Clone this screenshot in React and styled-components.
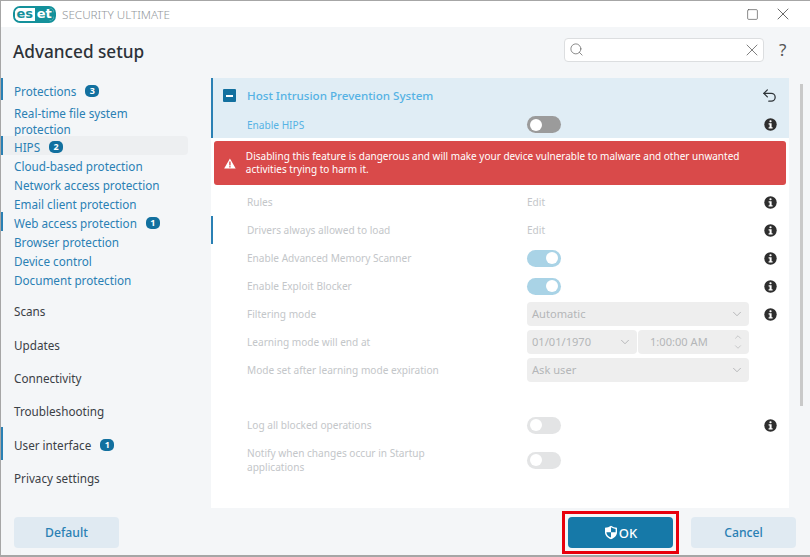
import React from 'react';
import styled, { createGlobalStyle } from 'styled-components';
import { Search, X, Square, ChevronDown, ChevronUp, Undo2 } from 'lucide-react';

const Global = createGlobalStyle`
  html, body {
    margin: 0;
    padding: 0;
    background: #fff;
  }
  * {
    box-sizing: border-box;
  }
`;

const Win = styled.div`
  width: 810px;
  height: 557px;
  display: flex;
  flex-direction: column;
  border-top: 1px solid #a6a6a6;
  border-left: 1px solid #a6a6a6;
  border-bottom: 2px solid #a6a6a6;
  background: #f4f6f8;
  font-family: "Noto Sans", sans-serif;
  font-size: 11.7px;
  color: #3b4046;
  overflow: hidden;
`;

const TitleBar = styled.div`
  height: 26px;
  flex: none;
  background: #fff;
  display: flex;
  align-items: center;
  padding: 0 17px 0 12px;
`;

const Logo = styled.div`
  width: 43px;
  height: 17px;
  border: 2px solid #14919b;
  border-radius: 7px;
  display: flex;
  align-items: stretch;
  overflow: hidden;
  font-family: "DejaVu Sans", sans-serif;
  font-weight: 700;
  font-size: 13px;
  line-height: 11px;
`;

const LogoPart = styled.span`
  flex: 1;
  text-align: center;
  background: ${p => (p.$fill ? '#14919b' : '#fff')};
  color: ${p => (p.$fill ? '#fff' : '#14919b')};
`;

const Product = styled.span`
  margin-left: 6px;
  font-size: 11.7px;
  font-weight: 300;
  color: #93979b;
  flex: 1;
`;

const MaxBtn = styled.span`
  display: flex;
  color: #4a4a4a;
`;

const CloseBtn = styled(MaxBtn)`
  margin-left: 14px;
`;

const Head = styled.div`
  height: 51px;
  flex: none;
  display: flex;
  align-items: center;
  padding: 0 21px 0 12px;
`;

const Title = styled.h1`
  margin: 0;
  flex: 1;
  font-size: 17.2px;
  font-weight: 500;
  color: #2c3238;
  position: relative;
  top: -1px;
`;

const SearchBox = styled.div`
  width: 200px;
  height: 24px;
  background: #fff;
  border: 1px solid #dcdee0;
  border-radius: 4px;
  display: flex;
  align-items: center;
  justify-content: space-between;
  padding: 0 1px 0 4px;
  color: #666;
  position: relative;
  top: -3px;
`;

const Help = styled.span`
  width: 10px;
  margin-left: 15px;
  font-size: 17px;
  color: #555;
  position: relative;
  top: -3px;
`;

const Body = styled.div`
  flex: 1;
  min-height: 0;
  display: flex;
`;

const Side = styled.nav`
  width: 210px;
  flex: none;
  display: flex;
  flex-direction: column;
`;

const NavItem = styled.div`
  width: 187px;
  min-height: 19px;
  padding: 3px 0 0 11px;
  display: flex;
  align-items: center;
  gap: 9px;
  line-height: 16px;
  color: #2a80b4;
  border-left: 2px solid ${p => (p.$mark ? '#2a80b4' : 'transparent')};
  border-radius: 0 4px 4px 0;
  background: ${p => (p.$active ? '#edeff1' : 'transparent')};
`;

const TopItem = styled(NavItem)`
  height: 33.4px;
  color: #3b4046;
`;

const FirstItem = styled(NavItem)`
  height: 22px;
  margin-bottom: 3px;
`;

const WrapItem = styled(NavItem)`
  height: 33px;
  padding-top: 2px;
`;

const ScansItem = styled(TopItem)`
  margin-top: 5px;
`;

const Badge = styled.span`
  width: 14px;
  height: 12px;
  border-radius: 5px;
  background: #12709f;
  color: #fff;
  font-size: 9px;
  font-weight: 700;
  line-height: 12px;
  text-align: center;
`;

const Panel = styled.main`
  width: 578px;
  height: 430px;
  flex: none;
  background: #fff;
`;

const PanelHead = styled.div`
  height: 60px;
  background: #e0edf5;
  border-left: 2px solid #2a80b4;
`;

const HeadRow = styled.div`
  height: 33px;
  display: flex;
  align-items: center;
  padding: 2px 11px 0 10px;
  color: #55b2e4;
  font-size: 11.6px;
  font-weight: 500;
`;

const Collapse = styled.span`
  width: 13px;
  height: 13px;
  background: #12709f;
  border-radius: 1px;
  margin-right: 11px;
  display: flex;
  align-items: center;
  justify-content: center;
  &::before {
    content: '';
    width: 7px;
    height: 2px;
    background: #fff;
  }
`;

const HeadText = styled.span`
  flex: 1;
`;

const Row = styled.div`
  display: grid;
  grid-template-columns: 280px 222px 1fr;
  align-items: center;
  height: ${p => p.$h || 28}px;
  padding-left: 34px;
  border-left: 2px solid ${p => (p.$mark ? '#2a80b4' : 'transparent')};
  color: ${p => (p.$on ? '#55b2e4' : '#c3c6c9')};
  font-size: 10.1px;
  line-height: 14px;
`;

const HipsRow = styled(Row)`
  border-left: 0;
`;

const Alert = styled.div`
  margin: 3px;
  height: 44px;
  background: #d94a4a;
  border-radius: 3px;
  display: flex;
  align-items: center;
  gap: 10px;
  padding: 0 16px 0 10px;
  color: #fff;
  font-size: 10px;
  line-height: 13px;
`;

const Toggle = styled.span`
  width: 34px;
  height: 17px;
  border-radius: 9px;
  background: ${p => (p.$dark ? '#9b9b9b' : p.$on ? '#a9d3e6' : '#e3e4e5')};
  display: flex;
  align-items: center;
  justify-content: ${p => (p.$on ? 'flex-end' : 'flex-start')};
  padding: 0 3px;
  &::before {
    content: '';
    width: 12px;
    height: 12px;
    border-radius: 50%;
    background: #fff;
  }
`;

const InfoWrap = styled.span`
  display: flex;
  justify-content: flex-end;
  padding-right: 12px;
`;

const Fields = styled.div`
  display: flex;
  gap: 1px;
  width: 222px;
`;

const Select = styled.div`
  flex: ${p => (p.$w ? `0 0 ${p.$w}px` : 1)};
  height: 24px;
  background: #eeeeee;
  border-radius: 4px;
  display: flex;
  align-items: center;
  justify-content: space-between;
  padding: 0 5px;
  font-size: 11.1px;
  color: #b4b6b8;
  svg {
    color: #8f9194;
  }
`;

const TimeText = styled.span`
  padding-left: 7px;
`;

const Arrows = styled.span`
  display: flex;
  flex-direction: column;
  margin-right: 1px;
`;

const Spacer = styled.div`
  height: ${p => p.$h}px;
`;

const Track = styled.div`
  flex: 1;
  position: relative;
`;

const Thumb = styled.span`
  position: absolute;
  left: 11px;
  top: 6px;
  width: 3px;
  height: 322px;
  background: #c9c9c9;
`;

const Footer = styled.div`
  height: 47px;
  flex: none;
  display: flex;
  align-items: center;
  padding: 2px 14px 0 13px;
`;

const Btn = styled.div`
  width: 105px;
  height: 31px;
  background: #e0eaf2;
  color: #2a80b4;
  border-radius: 4px;
  font-size: 12.2px;
  font-weight: 500;
  display: flex;
  align-items: center;
  justify-content: center;
`;

const OkFrame = styled.div`
  margin-left: auto;
  margin-right: 12px;
  border: 3px solid #e8000d;
  padding: 3px;
  width: 117px;
  height: 43px;
  display: flex;
`;

const OkBtn = styled(Btn)`
  flex: 1;
  height: 100%;
  background: #1679a8;
  color: #fff;
  font-size: 13px;
  gap: 1px;
`;

const Info = () => (
  <svg width="13" height="13" viewBox="0 0 13 13">
    <circle cx="6.5" cy="6.5" r="6.2" fill="#2e2e2e" />
    <rect x="5.4" y="2.2" width="2.2" height="2" rx="1" fill="#fff" />
    <path d="M4.6 5.2h3v4h1v1.3H4.6V9.2h1V6.5h-1z" fill="#fff" />
  </svg>
);

const Warn = () => (
  <svg width="14" height="13" viewBox="0 0 14 13">
    <path d="M7 0.5L13.8 12.5H0.2z" fill="#fff" />
    <rect x="6.2" y="4.2" width="1.6" height="4.6" fill="#d94a4a" />
    <rect x="6.2" y="9.6" width="1.6" height="1.6" fill="#d94a4a" />
  </svg>
);

const Shield = () => (
  <svg width="14" height="15" viewBox="0 0 14 15">
    <path d="M7 .8c1.8 1.3 3.8 1.9 6 2v4.4c0 3.2-2.4 5.7-6 7-3.6-1.3-6-3.8-6-7V2.8c2.2-.1 4.2-.7 6-2z" fill="#fff" />
    <path d="M7 2.2v5H2.4c.1 2.4 2 4.2 4.6 5.4V7.2h4.6V3.9C9.9 3.7 8.400 3.100 7 2.200z" fill="#1679a8" />
  </svg>
);

const App = () => (
  <>
    <Global />
    <Win>
      <TitleBar>
        <Logo>
          <LogoPart>es</LogoPart>
          <LogoPart $fill>et</LogoPart>
        </Logo>
        <Product>SECURITY ULTIMATE</Product>
        <MaxBtn><Square size={13} strokeWidth={1.2} /></MaxBtn>
        <CloseBtn><X size={20} strokeWidth={1} /></CloseBtn>
      </TitleBar>
      <Head>
        <Title>Advanced setup</Title>
        <SearchBox>
          <Search size={15} strokeWidth={1.2} />
          <X size={20} strokeWidth={1} />
        </SearchBox>
        <Help>?</Help>
      </Head>
      <Body>
        <Side>
          <FirstItem $mark>Protections <Badge>3</Badge></FirstItem>
          <WrapItem>Real-time file system<br />protection</WrapItem>
          <NavItem $mark $active>HIPS <Badge>2</Badge></NavItem>
          <NavItem>Cloud-based protection</NavItem>
          <NavItem>Network access protection</NavItem>
          <NavItem>Email client protection</NavItem>
          <NavItem $mark>Web access protection <Badge>1</Badge></NavItem>
          <NavItem>Browser protection</NavItem>
          <NavItem>Device control</NavItem>
          <NavItem>Document protection</NavItem>
          <ScansItem>Scans</ScansItem>
          <TopItem>Updates</TopItem>
          <TopItem>Connectivity</TopItem>
          <TopItem>Troubleshooting</TopItem>
          <TopItem $mark>User interface <Badge>1</Badge></TopItem>
          <TopItem>Privacy settings</TopItem>
        </Side>
        <Panel>
          <PanelHead>
            <HeadRow>
              <Collapse />
              <HeadText>Host Intrusion Prevention System</HeadText>
              <Undo2 size={17} strokeWidth={1.8} color="#2e3438" />
            </HeadRow>
            <HipsRow $h={27} $on>
              <span>Enable HIPS</span>
              <Toggle $dark />
              <InfoWrap><Info /></InfoWrap>
            </HipsRow>
          </PanelHead>
          <Alert>
            <Warn />
            <span>
              Disabling this feature is dangerous and will make your device vulnerable to malware and other unwanted activities trying to harm it.
            </span>
          </Alert>
          <Row>
            <span>Rules</span>
            <span>Edit</span>
            <InfoWrap><Info /></InfoWrap>
          </Row>
          <Row $mark>
            <span>Drivers always allowed to load</span>
            <span>Edit</span>
            <InfoWrap><Info /></InfoWrap>
          </Row>
          <Row>
            <span>Enable Advanced Memory Scanner</span>
            <Toggle $on />
            <InfoWrap><Info /></InfoWrap>
          </Row>
          <Row>
            <span>Enable Exploit Blocker</span>
            <Toggle $on />
            <InfoWrap><Info /></InfoWrap>
          </Row>
          <Row>
            <span>Filtering mode</span>
            <Fields>
              <Select>Automatic <ChevronDown size={14} strokeWidth={1} /></Select>
            </Fields>
            <InfoWrap><Info /></InfoWrap>
          </Row>
          <Row>
            <span>Learning mode will end at</span>
            <Fields>
              <Select $w={110}>01/01/1970 <ChevronDown size={14} strokeWidth={1} /></Select>
              <Select>
                <TimeText>1:00:00 AM</TimeText>
                <Arrows>
                  <ChevronUp size={10} strokeWidth={1} />
                  <ChevronDown size={10} strokeWidth={1} />
                </Arrows>
              </Select>
            </Fields>
          </Row>
          <Row>
            <span>Mode set after learning mode expiration</span>
            <Fields>
              <Select>Ask user <ChevronDown size={14} strokeWidth={1} /></Select>
            </Fields>
          </Row>
          <Spacer $h={27} />
          <Row>
            <span>Log all blocked operations</span>
            <Toggle />
            <InfoWrap><Info /></InfoWrap>
          </Row>
          <Row $h={42}>
            <span>Notify when changes occur in Startup<br />applications</span>
            <Toggle />
          </Row>
        </Panel>
        <Track><Thumb /></Track>
      </Body>
      <Footer>
        <Btn>Default</Btn>
        <OkFrame>
          <OkBtn><Shield />OK</OkBtn>
        </OkFrame>
        <Btn>Cancel</Btn>
      </Footer>
    </Win>
  </>
);

export default App;
